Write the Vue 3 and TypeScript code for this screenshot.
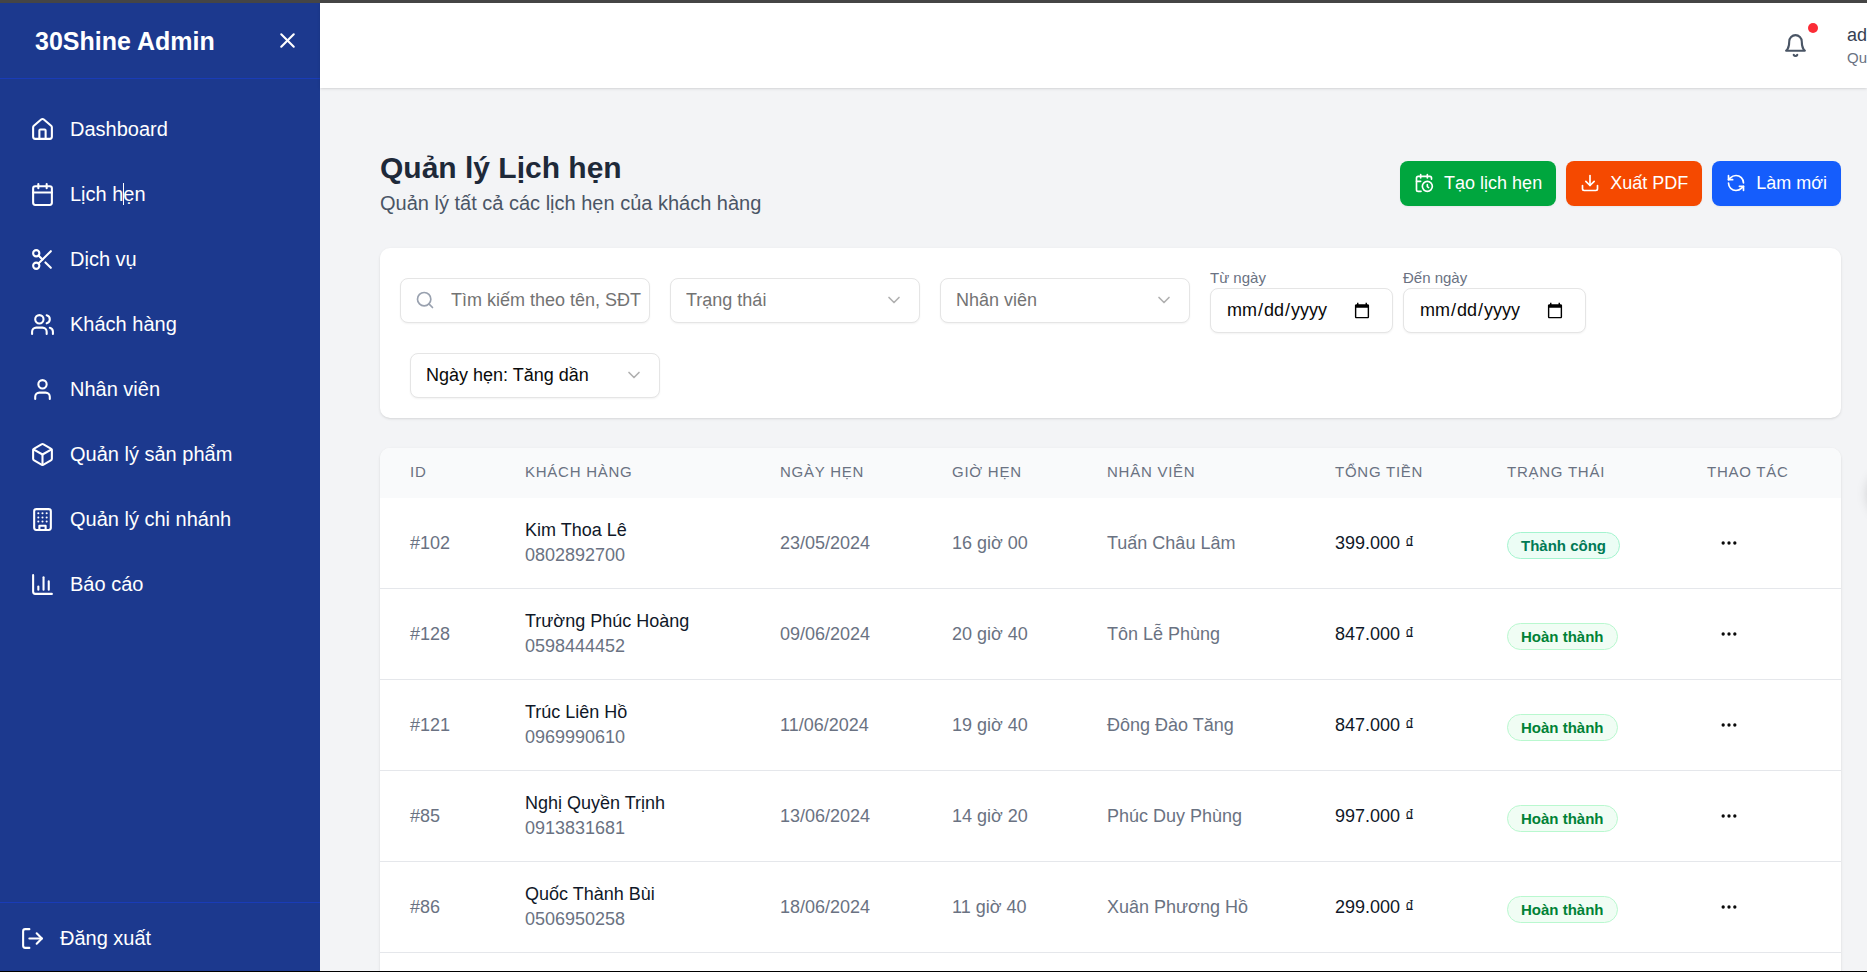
<script setup lang="ts">
import { ref } from 'vue'

interface NavItem {
  label: string
  paths: string[]
  active?: boolean
}

interface Appointment {
  id: number
  customer: string
  phone: string
  date: string
  time: string
  staff: string
  total: string
  status: 'success' | 'done'
}

const navItems: NavItem[] = [
  {
    label: 'Dashboard',
    paths: [
      'M15 21v-8a1 1 0 0 0-1-1h-4a1 1 0 0 0-1 1v8',
      'M3 10a2 2 0 0 1 .709-1.528l7-5.999a2 2 0 0 1 2.582 0l7 5.999A2 2 0 0 1 21 10v9a2 2 0 0 1-2 2H5a2 2 0 0 1-2-2z',
    ],
  },
  {
    label: 'Lịch hẹn',
    active: true,
    paths: ['M8 2v4', 'M16 2v4', 'M5 4h14a2 2 0 0 1 2 2v14a2 2 0 0 1-2 2H5a2 2 0 0 1-2-2V6a2 2 0 0 1 2-2z', 'M3 10h18'],
  },
  {
    label: 'Dịch vụ',
    paths: [
      'M9 6a3 3 0 1 1-6 0a3 3 0 1 1 6 0',
      'M8.12 8.12 12 12',
      'M20 4 8.12 15.88',
      'M9 18a3 3 0 1 1-6 0a3 3 0 1 1 6 0',
      'M14.8 14.8 20 20',
    ],
  },
  {
    label: 'Khách hàng',
    paths: [
      'M16 21v-2a4 4 0 0 0-4-4H6a4 4 0 0 0-4 4v2',
      'M13 7a4 4 0 1 1-8 0a4 4 0 1 1 8 0',
      'M22 21v-2a4 4 0 0 0-3-3.87',
      'M16 3.13a4 4 0 0 1 0 7.75',
    ],
  },
  {
    label: 'Nhân viên',
    paths: ['M19 21v-2a4 4 0 0 0-4-4H9a4 4 0 0 0-4 4v2', 'M16 7a4 4 0 1 1-8 0a4 4 0 1 1 8 0'],
  },
  {
    label: 'Quản lý sản phẩm',
    paths: [
      'M21 8a2 2 0 0 0-1-1.73l-7-4a2 2 0 0 0-2 0l-7 4A2 2 0 0 0 3 8v8a2 2 0 0 0 1 1.73l7 4a2 2 0 0 0 2 0l7-4A2 2 0 0 0 21 16Z',
      'm3.3 7 8.7 5 8.7-5',
      'M12 22V12',
    ],
  },
  {
    label: 'Quản lý chi nhánh',
    paths: [
      'M6 2h12a2 2 0 0 1 2 2v16a2 2 0 0 1-2 2H6a2 2 0 0 1-2-2V4a2 2 0 0 1 2-2z',
      'M9 22v-4h6v4',
      'M8 6h.01M12 6h.01M16 6h.01M8 10h.01M12 10h.01M16 10h.01M8 14h.01M12 14h.01M16 14h.01',
    ],
  },
  {
    label: 'Báo cáo',
    paths: ['M3 3v16a2 2 0 0 0 2 2h16', 'M18 17V9', 'M13 17V5', 'M8 17v-3'],
  },
]

const columns = ['ID', 'Khách hàng', 'Ngày hẹn', 'Giờ hẹn', 'Nhân viên', 'Tổng tiền', 'Trạng thái', 'Thao tác']

const statusLabels = { success: 'Thành công', done: 'Hoàn thành' }

const appointments: Appointment[] = [
  { id: 102, customer: 'Kim Thoa Lê', phone: '0802892700', date: '23/05/2024', time: '16 giờ 00', staff: 'Tuấn Châu Lâm', total: '399.000 ₫', status: 'success' },
  { id: 128, customer: 'Trường Phúc Hoàng', phone: '0598444452', date: '09/06/2024', time: '20 giờ 40', staff: 'Tôn Lễ Phùng', total: '847.000 ₫', status: 'done' },
  { id: 121, customer: 'Trúc Liên Hồ', phone: '0969990610', date: '11/06/2024', time: '19 giờ 40', staff: 'Đông Đào Tăng', total: '847.000 ₫', status: 'done' },
  { id: 85, customer: 'Nghị Quyền Trịnh', phone: '0913831681', date: '13/06/2024', time: '14 giờ 20', staff: 'Phúc Duy Phùng', total: '997.000 ₫', status: 'done' },
  { id: 86, customer: 'Quốc Thành Bùi', phone: '0506950258', date: '18/06/2024', time: '11 giờ 40', staff: 'Xuân Phương Hồ', total: '299.000 ₫', status: 'done' },
]

const search = ref('')
const status = ref('')
const staff = ref('')
const sort = ref('asc')
const fromDate = ref('')
const toDate = ref('')
</script>

<template>
  <div class="shell">
    <aside class="sidebar">
      <div class="brand">
        <span class="brand-name">30Shine Admin</span>
        <button class="icon-button" type="button" aria-label="Đóng menu">
          <svg class="icon" viewBox="0 0 24 24"><path d="M18 6 6 18" /><path d="m6 6 12 12" /></svg>
        </button>
      </div>
      <nav class="nav">
        <a v-for="item in navItems" :key="item.label" class="nav-link" href="#">
          <svg class="icon" viewBox="0 0 24 24"><path v-for="d in item.paths" :key="d" :d="d" /></svg>
          <span class="nav-label" :class="{ caret: item.active }">{{ item.label }}</span>
        </a>
      </nav>
      <button class="logout" type="button">
        <svg class="icon" viewBox="0 0 24 24">
          <path d="M9 21H5a2 2 0 0 1-2-2V5a2 2 0 0 1 2-2h4" />
          <path d="m16 17 5-5-5-5" />
          <path d="M21 12H9" />
        </svg>
        <span>Đăng xuất</span>
      </button>
    </aside>

    <div class="page">
      <header class="topbar">
        <button class="bell" type="button" aria-label="Thông báo">
          <svg class="icon" viewBox="0 0 24 24">
            <path d="M6 8a6 6 0 0 1 12 0c0 7 3 9 3 9H3s3-2 3-9" />
            <path d="M10.3 21a1.94 1.94 0 0 0 3.4 0" />
          </svg>
          <span class="bell-dot"></span>
        </button>
        <div class="user">
          <span class="user-name">ad</span>
          <span class="user-role">Qu</span>
        </div>
      </header>

      <main class="content">
        <div class="heading">
          <div>
            <h1>Quản lý Lịch hẹn</h1>
            <p>Quản lý tất cả các lịch hẹn của khách hàng</p>
          </div>
          <div class="actions">
            <button class="action green" type="button">
              <svg class="icon small" viewBox="0 0 24 24">
                <path d="M21 7.5V6a2 2 0 0 0-2-2H5a2 2 0 0 0-2 2v14a2 2 0 0 0 2 2h3.5" />
                <path d="M16 2v4" />
                <path d="M8 2v4" />
                <path d="M3 10h5" />
                <path d="M17.5 17.5 16 16.3V14" />
                <circle cx="16" cy="16" r="6" />
              </svg>
              Tạo lịch hẹn
            </button>
            <button class="action orange" type="button">
              <svg class="icon small" viewBox="0 0 24 24">
                <path d="M21 15v4a2 2 0 0 1-2 2H5a2 2 0 0 1-2-2v-4" />
                <path d="m7 10 5 5 5-5" />
                <path d="M12 15V3" />
              </svg>
              Xuất PDF
            </button>
            <button class="action blue" type="button">
              <svg class="icon small" viewBox="0 0 24 24">
                <path d="M21 12a9 9 0 0 0-9-9 9.75 9.75 0 0 0-6.74 2.74L3 8" />
                <path d="M3 3v5h5" />
                <path d="M3 12a9 9 0 0 0 9 9 9.75 9.75 0 0 0 6.74-2.74L21 16" />
                <path d="M16 16h5v5" />
              </svg>
              Làm mới
            </button>
          </div>
        </div>

        <form class="card filters" @submit.prevent>
          <div class="field">
            <svg class="icon small search-icon" viewBox="0 0 24 24">
              <circle cx="11" cy="11" r="8" />
              <path d="m21 21-4.3-4.3" />
            </svg>
            <input v-model="search" class="control search" type="text" aria-label="Tìm kiếm" placeholder="Tìm kiếm theo tên, SĐT" />
          </div>
          <div class="field">
            <select v-model="status" class="control muted" aria-label="Trạng thái">
              <option value="">Trạng thái</option>
            </select>
            <svg class="icon small chevron" viewBox="0 0 24 24"><path d="m6 9 6 6 6-6" /></svg>
          </div>
          <div class="field">
            <select v-model="staff" class="control muted" aria-label="Nhân viên">
              <option value="">Nhân viên</option>
            </select>
            <svg class="icon small chevron" viewBox="0 0 24 24"><path d="m6 9 6 6 6-6" /></svg>
          </div>
          <div class="dates">
            <div class="date-field">
              <label for="from-date">Từ ngày</label>
              <input id="from-date" v-model="fromDate" class="control date" type="date" />
            </div>
            <div class="date-field">
              <label for="to-date">Đến ngày</label>
              <input id="to-date" v-model="toDate" class="control date" type="date" />
            </div>
          </div>
          <div class="field sort">
            <select v-model="sort" class="control" aria-label="Sắp xếp">
              <option value="asc">Ngày hẹn: Tăng dần</option>
            </select>
            <svg class="icon small chevron" viewBox="0 0 24 24"><path d="m6 9 6 6 6-6" /></svg>
          </div>
        </form>

        <div class="card table-card">
          <table>
            <thead>
              <tr>
                <th v-for="column in columns" :key="column" scope="col">{{ column }}</th>
              </tr>
            </thead>
            <tbody>
              <tr v-for="row in appointments" :key="row.id">
                <td>#{{ row.id }}</td>
                <td>
                  <div class="strong">{{ row.customer }}</div>
                  <div>{{ row.phone }}</div>
                </td>
                <td>{{ row.date }}</td>
                <td>{{ row.time }}</td>
                <td>{{ row.staff }}</td>
                <td class="strong">{{ row.total }}</td>
                <td><span class="badge" :class="row.status">{{ statusLabels[row.status] }}</span></td>
                <td>
                  <button class="more" type="button" aria-label="Thao tác">
                    <svg class="icon small" viewBox="0 0 24 24">
                      <circle cx="12" cy="12" r="1" />
                      <circle cx="19" cy="12" r="1" />
                      <circle cx="5" cy="12" r="1" />
                    </svg>
                  </button>
                </td>
              </tr>
            </tbody>
          </table>
        </div>
      </main>
    </div>
  </div>
</template>

<style>
body {
  margin: 0;
  overflow: hidden;
}
</style>

<style scoped>
.shell,
.shell * {
  box-sizing: border-box;
}

.shell {
  position: relative;
  display: flex;
  height: 100vh;
  overflow: hidden;
  border-top: 3px solid #454545;
  border-bottom: 1px solid #000;
  background: #f3f4f6;
  font-family: "Liberation Sans", Arial, sans-serif;
  font-size: 20px;
  line-height: 30px;
}

/* Docked round handle, tucked behind the right edge so only its shadow shows */
.shell::after {
  position: absolute;
  top: 462px;
  right: -50px;
  width: 50px;
  height: 50px;
  border-radius: 50%;
  box-shadow: 0 4px 12px rgb(0 0 0 / 15%);
  content: "";
}

button,
input,
select {
  margin: 0;
  font: inherit;
}

button {
  border: 0;
  padding: 0;
  background: none;
  color: inherit;
  cursor: pointer;
}

.icon {
  display: block;
  flex: none;
  width: 25px;
  height: 25px;
  fill: none;
  stroke: currentColor;
  stroke-width: 2;
  stroke-linecap: round;
  stroke-linejoin: round;
}

.icon.small {
  width: 20px;
  height: 20px;
}

.sidebar {
  display: flex;
  flex: none;
  flex-direction: column;
  width: 320px;
  background: #1c398e;
  color: #fff;
}

.brand {
  display: flex;
  align-items: center;
  justify-content: space-between;
  height: 76px;
  padding: 0 20px 0 35px;
  border-bottom: 1px solid #193cb8;
}

.brand-name {
  font-size: 25px;
  font-weight: 700;
}

.nav {
  display: flex;
  flex: 1;
  flex-direction: column;
  gap: 15px;
  padding: 25px 15px;
}

.nav-link {
  display: flex;
  align-items: center;
  gap: 15px;
  padding: 10px 15px;
  color: inherit;
  text-decoration: none;
}

.nav-label {
  position: relative;
}

.caret::after {
  position: absolute;
  top: 4px;
  left: 53px;
  width: 1px;
  height: 22px;
  background: #fff;
  content: "";
}

.logout {
  display: flex;
  align-items: center;
  gap: 15px;
  padding: 20px 20px 18px;
  border-top: 1px solid #193cb8;
  text-align: left;
}

.page {
  display: flex;
  flex: 1;
  flex-direction: column;
  min-width: 0;
}

.topbar {
  display: flex;
  flex: none;
  align-items: center;
  justify-content: flex-end;
  gap: 29px;
  height: 85px;
  background: #fff;
}

.topbar,
.card {
  box-shadow: 0 1px 3px rgb(0 0 0 / 10%), 0 1px 2px -1px rgb(0 0 0 / 10%);
}

.bell {
  position: relative;
  padding: 10px;
  color: #4a5565;
}

.bell-dot {
  position: absolute;
  top: 0;
  right: 0;
  width: 10px;
  height: 10px;
  border-radius: 50%;
  background: #fb2c36;
}

.user {
  display: flex;
  flex-direction: column;
  width: 20px;
  white-space: nowrap;
}

.user-name {
  color: #364153;
  font-size: 18px;
  line-height: 25px;
}

.user-role {
  color: #6a7282;
  font-size: 15px;
  line-height: 20px;
}

.content {
  display: flex;
  flex: 1;
  flex-direction: column;
  min-height: 0;
  overflow: hidden;
  padding: 60px 26px 0 60px;
}

.heading {
  display: flex;
  align-items: center;
  justify-content: space-between;
}

h1,
p {
  margin: 0;
}

h1 {
  color: #1e2939;
  font-size: 30px;
  line-height: 40px;
}

p {
  color: #4a5565;
}

.actions {
  display: flex;
  gap: 10px;
}

.action {
  display: flex;
  align-items: center;
  gap: 10px;
  height: 45px;
  padding: 0 14px;
  border-radius: 8px;
  color: #fff;
  font-size: 18px;
  box-shadow: 0 1px 2px rgb(0 0 0 / 5%);
}

.green {
  background: #00a63e;
}

.orange {
  background: #f54900;
}

.blue {
  background: #155dfc;
}

.card {
  flex: none;
  margin-top: 30px;
  border-radius: 10px;
  background: #fff;
}

.filters {
  display: flex;
  flex-wrap: wrap;
  align-items: center;
  gap: 20px;
  padding: 20px;
}

.field {
  position: relative;
  width: 250px;
}

.control {
  display: block;
  width: 100%;
  height: 45px;
  padding: 0 15px;
  border: 1px solid #e5e5e5;
  border-radius: 8px;
  appearance: none;
  background: #fff;
  color: #0a0a0a;
  font-size: 18px;
  line-height: 25px;
  box-shadow: 0 1px 2px rgb(0 0 0 / 5%);
}

.search {
  padding: 0 5px 0 50px;
}

.date {
  padding-right: 19px;
}

.search::placeholder,
.muted {
  color: #737373;
  opacity: 1;
}

.search-icon,
.chevron {
  position: absolute;
  top: 12px;
  pointer-events: none;
}

.search-icon {
  left: 15px;
  color: #99a1af;
}

.chevron {
  right: 16px;
  color: #b0b0b0;
}

.dates {
  display: flex;
  gap: 10px;
}

.date-field {
  width: 183px;
}

.date-field label {
  display: block;
  color: #6a7282;
  font-size: 15px;
  line-height: 20px;
}

.sort {
  margin-left: 10px;
}

/* The list runs on below the fold */
.table-card {
  min-height: 100%;
  overflow: hidden;
}

table {
  width: 100%;
  border-collapse: separate;
  border-spacing: 0;
  table-layout: fixed;
}

th {
  height: 50px;
  padding: 0 0 2px 30px;
  background: #f9fafb;
  color: #6a7282;
  font-size: 15px;
  font-weight: 400;
  letter-spacing: 0.05em;
  line-height: 20px;
  text-align: left;
  text-transform: uppercase;
}

th:nth-child(1) {
  width: 115px;
}

th:nth-child(2) {
  width: 255px;
}

th:nth-child(3),
th:nth-child(6) {
  width: 172px;
}

th:nth-child(4) {
  width: 155px;
}

th:nth-child(5) {
  width: 228px;
}

th:nth-child(7) {
  width: 200px;
}

th:nth-child(8) {
  width: 164px;
}

td {
  height: 91px;
  padding: 0 0 0 30px;
  border-bottom: 1px solid #e5e7eb;
  color: #6a7282;
  font-size: 18px;
  line-height: 25px;
}

.strong {
  color: #101828;
}

.badge {
  display: inline-block;
  margin-top: 4px;
  padding: 0 13px;
  border: 1px solid;
  border-radius: 14px;
  font-size: 15px;
  font-weight: 700;
}

.success {
  border-color: #a4f4cf;
  background: #ecfdf5;
  color: #007a55;
}

.done {
  border-color: #b9f8cf;
  background: #f0fdf4;
  color: #008236;
}

.more {
  display: block;
  padding: 12px;
  color: #0a0a0a;
}
</style>
